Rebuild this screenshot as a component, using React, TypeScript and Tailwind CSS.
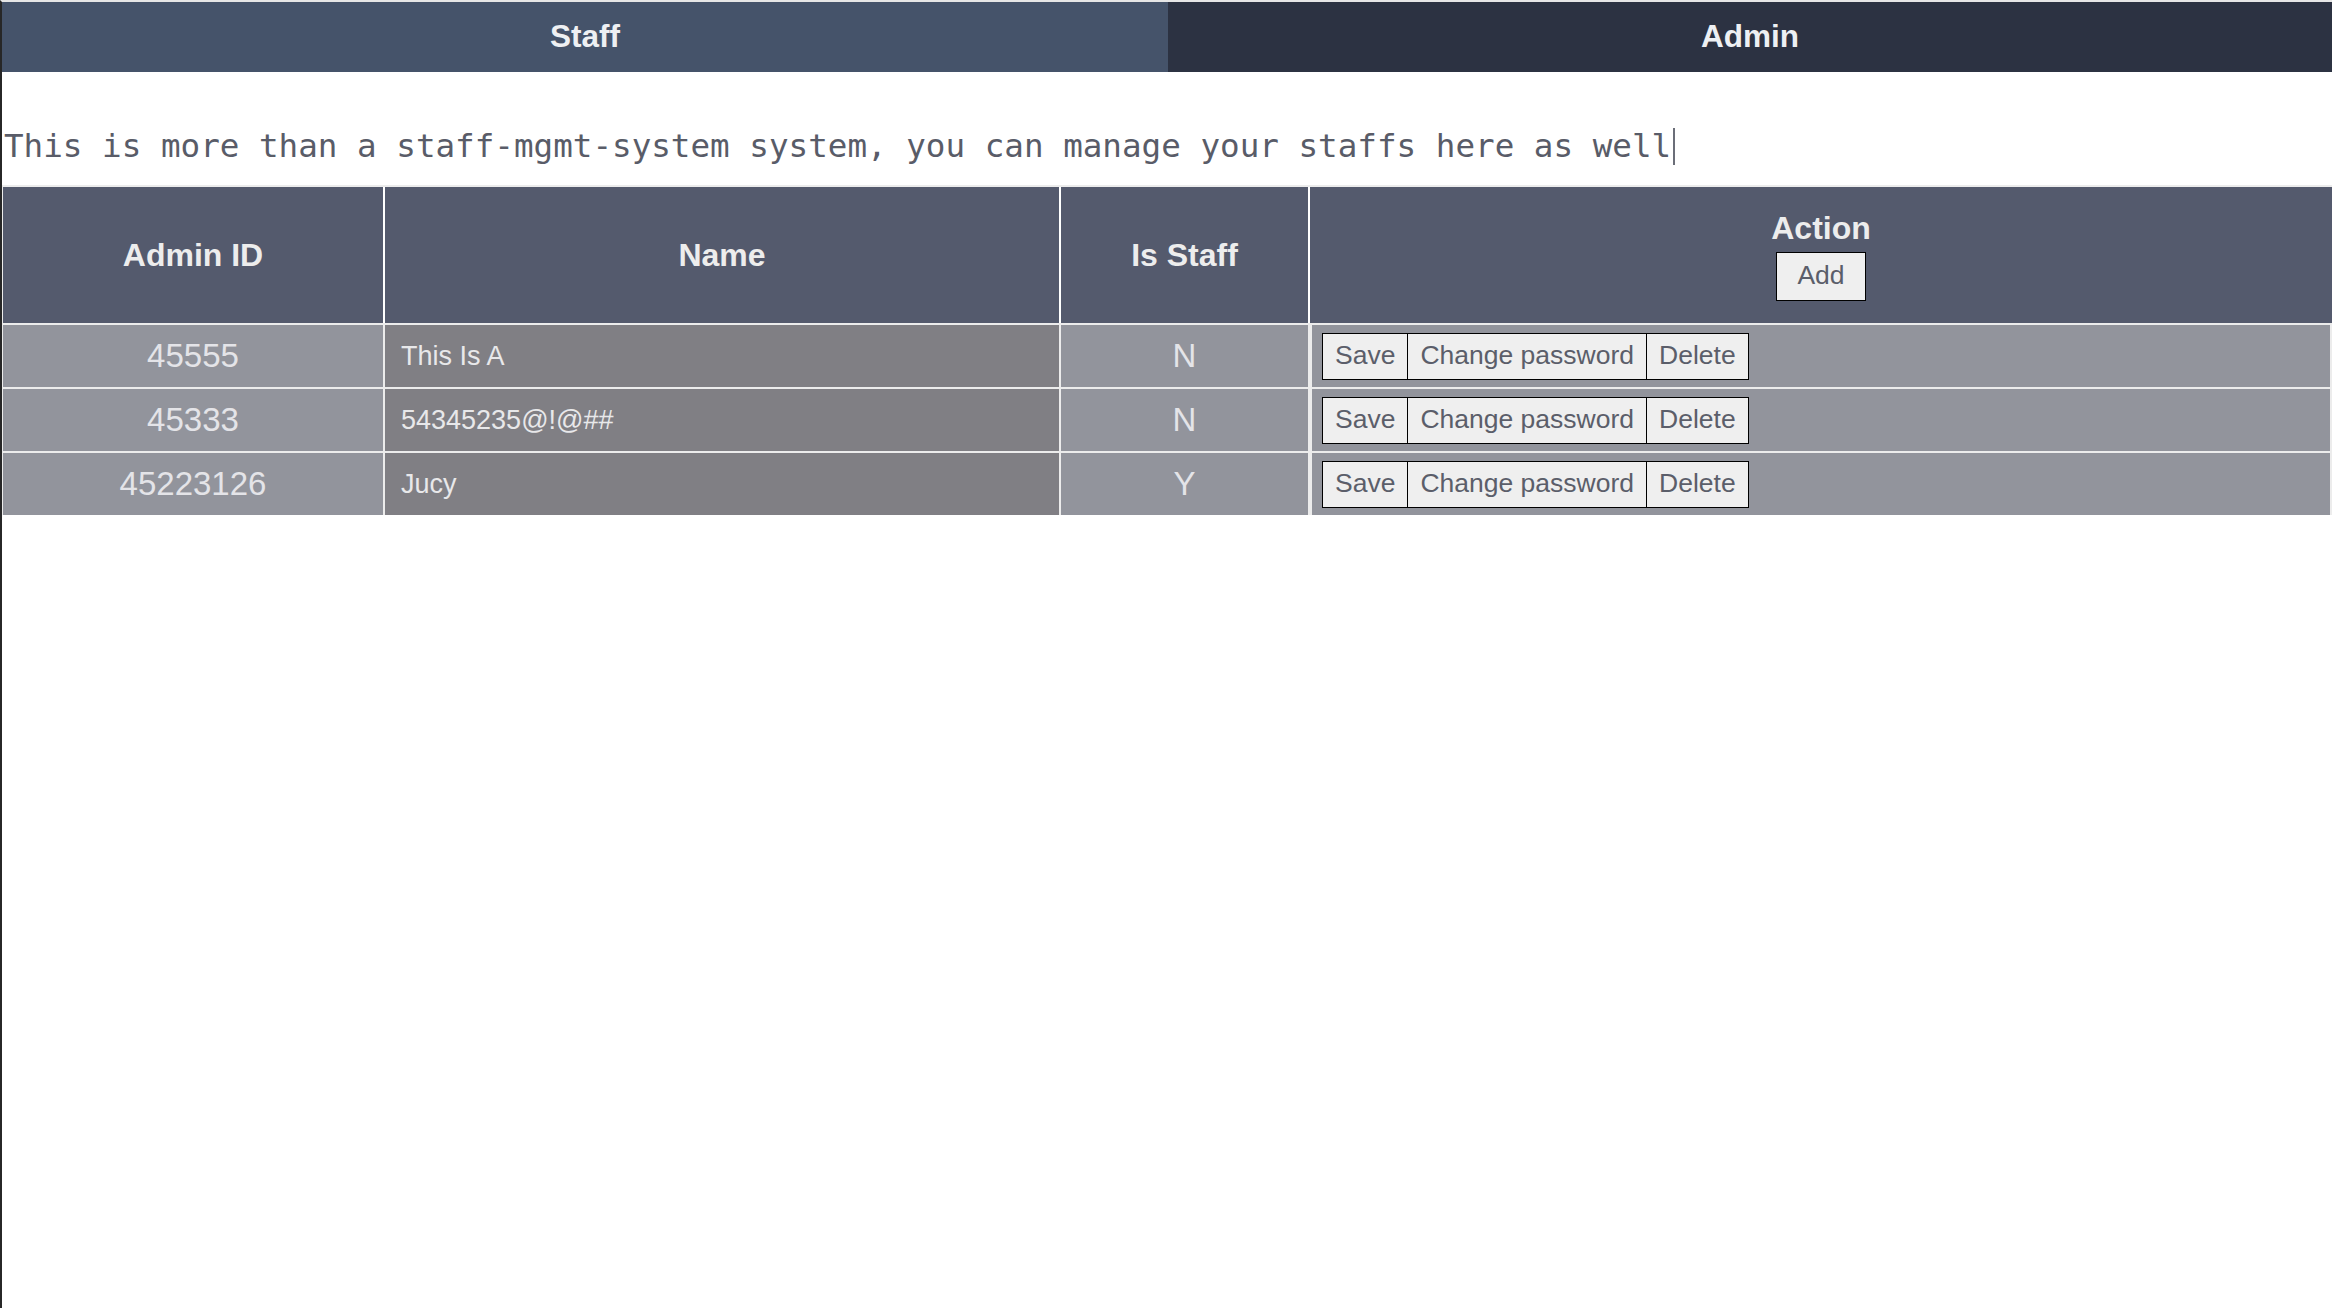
import { useState } from 'react';

type Admin = {
  id: string;
  name: string;
  isStaff: 'Y' | 'N';
};

const ADMINS: Admin[] = [
  { id: '45555', name: 'This Is A', isStaff: 'N' },
  { id: '45333', name: '54345235@!@##', isStaff: 'N' },
  { id: '45223126', name: 'Jucy', isStaff: 'Y' },
];

const COLS = 'grid grid-cols-[380px_674px_247px_1fr] gap-x-[2px]';

export default function App() {
  const [tab, setTab] = useState<'staff' | 'admin'>('staff');

  return (
    <div className="min-h-screen bg-white border-t-2 border-[#e6e6e6] border-l-2 border-l-[#272727] font-['Liberation_Sans',Arial,sans-serif]">
      {/* Top nav */}
      <div className="flex h-[70px]">
        <button
          onClick={() => setTab('staff')}
          className="w-[1166px] bg-[#45536a] text-[#eef0f3] text-[31.5px] font-bold flex items-center justify-center"
        >
          Staff
        </button>
        <button
          onClick={() => setTab('admin')}
          className="flex-1 bg-[#2c3242] text-[#eef0f3] text-[31.5px] font-bold flex items-center justify-center"
        >
          Admin
        </button>
      </div>

      {/* Intro line */}
      <div className="mt-[54px] h-[40px] pl-[2px] flex items-center font-['DejaVu_Sans_Mono',monospace] text-[32.6px] text-[#595c68] whitespace-nowrap">
        <span>
          This is more than a staff-mgmt-system system, you can manage your staffs here as well
        </span>
        <span className="inline-block w-[2px] h-[37px] bg-[#6b6e78] ml-[2px]" />
      </div>

      {/* Table */}
      <div className="mt-[19px] bg-[#ececec] pl-px pt-[2px]">
        <div className={`${COLS} bg-white h-[136px] text-[#ededed] text-[32px] font-bold`}>
          <div className="bg-[#545a6d] flex items-center justify-center">Admin ID</div>
          <div className="bg-[#545a6d] flex items-center justify-center">Name</div>
          <div className="bg-[#545a6d] flex items-center justify-center">Is Staff</div>
          <div className="bg-[#545a6d] flex flex-col items-center justify-center gap-[5px]">
            <span className="leading-[37px]">Action</span>
            <button className="h-[49px] px-[20px] bg-[#efefef] border border-black text-[#5b5e6a] text-[26.5px] font-normal">
              Add
            </button>
          </div>
        </div>

        <div className="flex flex-col gap-y-[2px] pt-[2px]">
          {ADMINS.map((a) => (
            <div key={a.id} className={`${COLS} h-[62px]`}>
              <div className="bg-[#92949c] flex items-center justify-center text-[33px] text-[#e4e4e8]">
                {a.id}
              </div>
              <div className="bg-[#807f84] flex items-center pl-[16px] text-[27px] text-[#e8e8ea]">
                {a.name}
              </div>
              <div className="bg-[#92949c] flex items-center justify-center text-[33px] text-[#e4e4e8]">
                {a.isStaff}
              </div>
              <div className="bg-[#92949c] ml-[2px] mr-[2px] flex items-center pl-[10px]">
                <div className="flex h-[47px] text-[26.5px] text-[#5b5e6a]">
                  <button className="bg-[#efefef] border border-black px-[12px]">Save</button>
                  <button className="bg-[#efefef] border-y border-r border-black px-[12px]">
                    Change password
                  </button>
                  <button className="bg-[#efefef] border-y border-r border-black px-[12px]">
                    Delete
                  </button>
                </div>
              </div>
            </div>
          ))}
        </div>
      </div>
    </div>
  );
}
